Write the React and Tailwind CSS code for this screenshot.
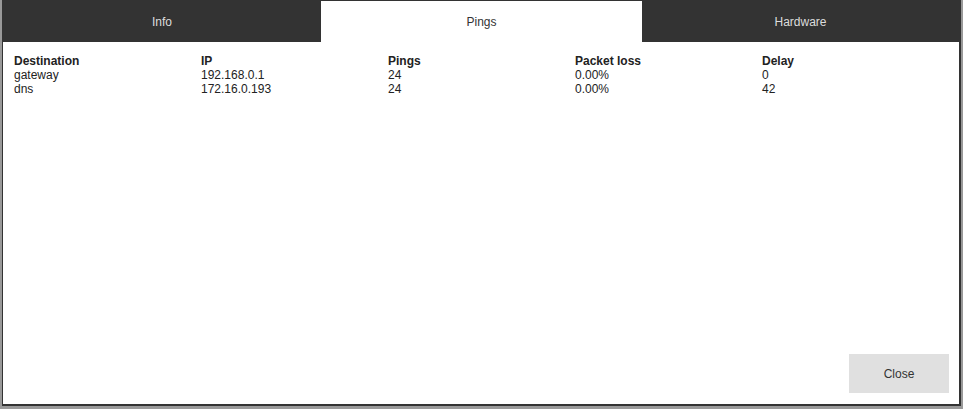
export default function App() {
  const rows = [
    ["gateway", "192.168.0.1", "24", "0.00%", "0"],
    ["dns", "172.16.0.193", "24", "0.00%", "42"],
  ];
  const heads = ["Destination", "IP", "Pings", "Packet loss", "Delay"];
  return (
    <div
      className="w-[963px] h-[409px] bg-[#999999] pl-[2px]"
      style={{ fontFamily: '"Liberation Sans", Arial, sans-serif' }}
    >
      <div className="h-[406px] w-[959px] border-t border-l border-r-2 border-b-2 border-[#333333] bg-white flex flex-col">
        <div className="flex h-[41px] bg-[#333333] text-[12px]">
          <div className="w-[318px] flex items-center justify-center text-[#dddddd]">Info</div>
          <div className="w-[321px] flex items-center justify-center bg-white text-[#333333]">Pings</div>
          <div className="flex-1 flex items-center justify-center text-[#dddddd]">Hardware</div>
        </div>
        <div className="flex-1 pl-[11px] pr-[10px] pt-[12px] text-[12px] leading-[14px] text-[#222222]">
          <div className="grid grid-cols-5 font-bold">
            {heads.map((h) => (
              <div key={h}>{h}</div>
            ))}
          </div>
          {rows.map((r) => (
            <div key={r[0]} className="grid grid-cols-5">
              {r.map((c, i) => (
                <div key={i}>{c}</div>
              ))}
            </div>
          ))}
        </div>
        <div className="flex justify-end pr-[10px] pb-[11px]">
          <button className="w-[100px] h-[39px] bg-[#e0e0e0] text-[12px] text-[#333333]">Close</button>
        </div>
      </div>
    </div>
  );
}
